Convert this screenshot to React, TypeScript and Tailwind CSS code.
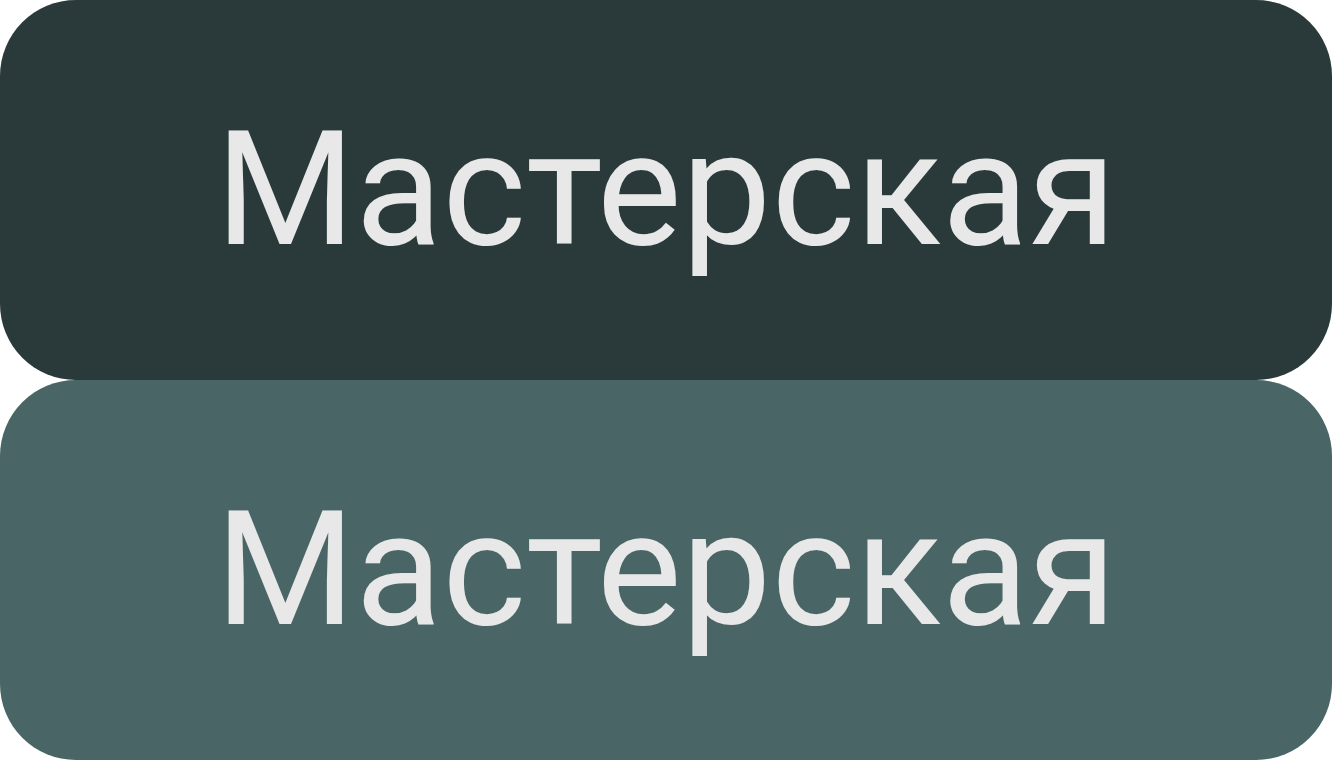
export default function App() {
  return (
    <div className="flex flex-col w-[1332px] h-[760px] bg-white">
      <button className="h-[380px] w-full rounded-[76px] bg-[#2a3a3a] flex items-center justify-center">
        <span className="text-[160px] leading-none text-[#e8e8e8] font-['Roboto',sans-serif]">
          Мастерская
        </span>
      </button>
      <button className="h-[380px] w-full rounded-[76px] bg-[#4a6566] flex items-center justify-center">
        <span className="text-[160px] leading-none text-[#e8e8e8] font-['Roboto',sans-serif]">
          Мастерская
        </span>
      </button>
    </div>
  );
}
